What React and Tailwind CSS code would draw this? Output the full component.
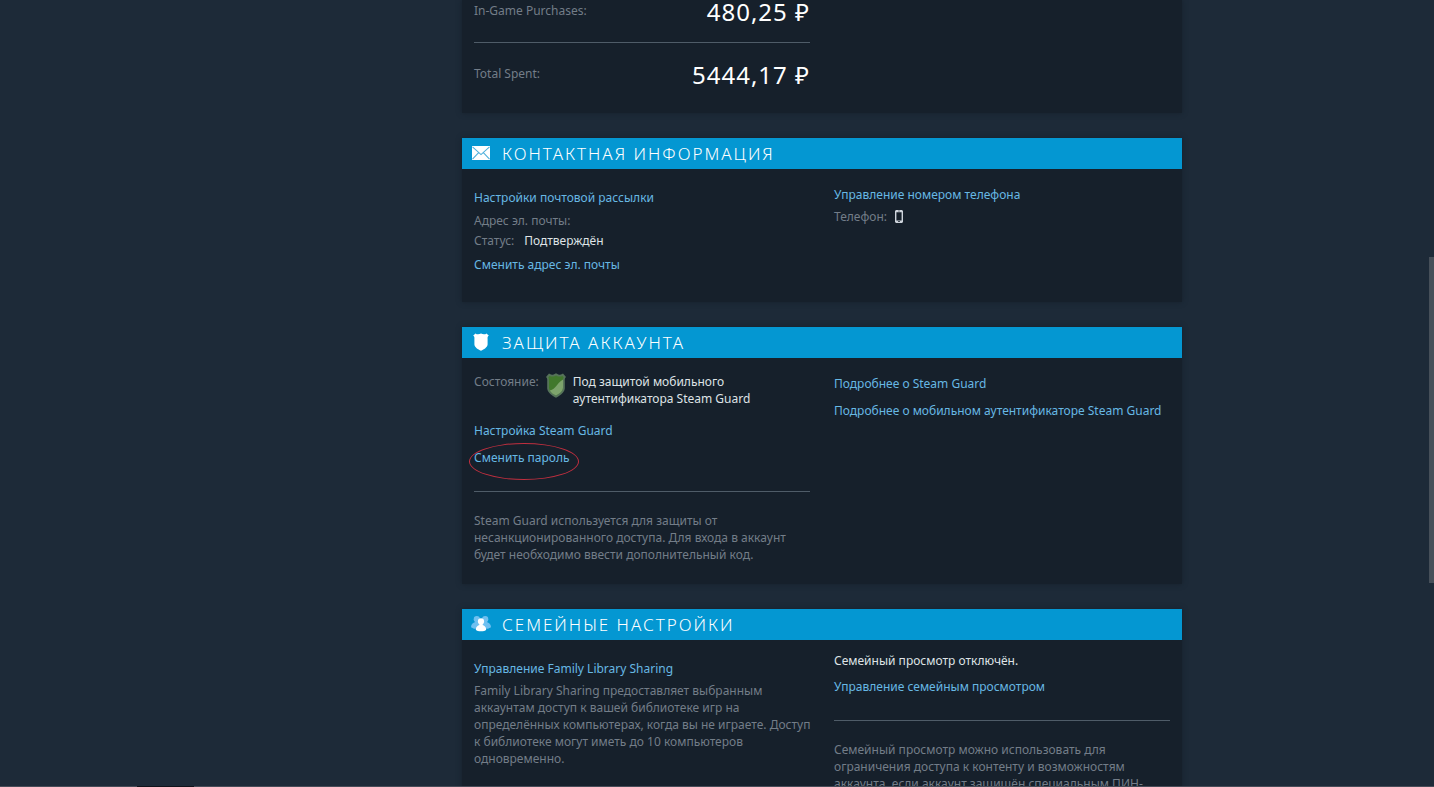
import React from 'react';

const EnvelopeIcon = () => (
  <svg viewBox="0 0 18 14" className="w-[18px] h-[14px]">
    <rect width="18" height="14" fill="#fff" />
    <path d="M0.5 0.8 L9 8.6 L17.5 0.8 M0.5 13.2 L6.4 6.8 M17.5 13.2 L11.6 6.8" fill="none" stroke="#4fb0dc" strokeWidth="1.1" />
  </svg>
);

const ShieldIcon = () => (
  <svg viewBox="0 0 16 18" className="w-4 h-[18px]">
    <path d="M2.6 0.4 C3.6 1.6 6 1.6 8 0.6 C10 1.6 12.4 1.6 13.4 0.4 L15.8 2.6 C14.6 3.6 14.4 4.6 14.6 6 V11.4 C14.4 14.4 11 16 8 17.8 C5 16 1.6 14.4 1.4 11.4 V6 C1.6 4.6 1.4 3.6 0.2 2.6 Z" fill="#fff" />
  </svg>
);

const FamilyIcon = () => (
  <svg viewBox="0 0 20 16" className="w-5 h-4">
    <g fill="#6fc0f0">
      <circle cx="5.8" cy="3.2" r="3.1" />
      <circle cx="14.2" cy="3.2" r="3.1" />
      <path d="M0 11.2 C0 8.2 2 6.8 4.2 6 H15.8 C18 6.8 20 8.2 20 11.2 L17 12.8 H3 Z" />
    </g>
    <circle cx="10" cy="5.4" r="3.1" fill="#fff" />
    <path d="M4.8 13.8 C4.8 10.8 6.8 9.6 8.4 9 V7.6 H11.6 V9 C13.2 9.6 15.2 10.8 15.2 13.8 C13.6 15.8 6.4 15.8 4.8 13.8 Z" fill="#fff" />
  </svg>
);

const PhoneIcon = () => (
  <svg viewBox="0 0 8 13" className="w-2 h-[13px]">
    <path fillRule="evenodd" d="M1 0 H7 L8 1 V12 L7 13 H1 L0 12 V1 Z M1.4 2.2 V10.4 H6.6 V2.2 Z M3 0.8 H5 V1.3 H3 Z M3 11.3 H5 V12.1 H3 Z" fill="#ced4dc" />
  </svg>
);

const GuardBadge = () => (
  <svg viewBox="0 0 20 25" className="w-5 h-[25px] shrink-0">
    <path d="M3 0.6 C5 2.4 8 1.8 10 0.2 C12 1.8 15 2.4 17 0.6 L20 4 C18.4 5.4 18.8 7 18.8 9 V15.4 C18.2 20 14 22.4 10 24.8 C6 22.4 1.8 20 1.2 15.4 V9 C1.2 7 1.6 5.4 0 4 Z" fill="#56735a" />
    <path d="M3.6 3 C6 4 8.4 3.6 10 2.4 C11.6 3.6 14 4 16.4 3 L17.6 4.6 C16.8 6 17 7.6 17 9 V14.8 C16.4 19 13.4 20.6 10 22.6 C6.6 20.6 3.6 19 3 14.8 V9 C3 7.6 3.2 6 2.4 4.6 Z" fill="#41782c" />
    <path d="M17 6.4 V14.8 C16.4 19 13.4 20.6 10 22.6 C7.4 21.1 5 19.8 3.8 17.4 C10.5 16 9.5 11 17 6.4 Z" fill="#7da36c" />
  </svg>
);

const Link = ({ children }) => (
  <a href="#" className="text-[#67b8e4] hover:text-white">{children}</a>
);

const Divider = () => <hr className="border-0 h-px bg-[#4f5c68]" />;

function Section({ icon, title, children }) {
  return (
    <section className="shadow-[0_0_5px_#16202b]">
      <header className="flex items-center h-[31px] pl-2 bg-[#0497d2]">
        <span className="w-[22px] pb-0.5 flex justify-center">{icon}</span>
        <h2 className="pl-2.5 text-[17px] leading-[31px] font-light tracking-[2px] uppercase text-white">{title}</h2>
      </header>
      <div className="grid grid-cols-2 gap-x-6 px-3 bg-[#16202b]">{children}</div>
    </section>
  );
}

function SpendRow({ label, value }) {
  return (
    <div className="flex items-start justify-between">
      <span className="leading-[21px]">{label}</span>
      <span className="text-[24px] leading-[23px] tracking-[1px] text-white">{value}</span>
    </div>
  );
}

export default function App() {
  return (
    <div className="relative flex flex-col h-screen overflow-hidden bg-[#1d2a38] font-['Noto_Sans',sans-serif] text-[12px] leading-[17px] text-[#737d88]">
      <main className="flex-1 min-h-0 overflow-hidden pr-2.5">
        <div className="max-w-[940px] mx-auto pl-[220px] flex flex-col gap-[25px]">
          <section className="grid grid-cols-2 gap-x-6 px-3 pb-[27px] bg-[#16202b] shadow-[0_0_5px_#16202b]">
            <div>
              <SpendRow label="In-Game Purchases:" value="480,25 ₽" />
              <div className="pt-[19px] pb-5"><Divider /></div>
              <SpendRow label="Total Spent:" value="5444,17 ₽" />
            </div>
          </section>

          <Section icon={<EnvelopeIcon />} title="Контактная информация">
            <div className="pt-5 pb-[29px]">
              <Link>Настройки почтовой рассылки</Link>
              <p className="pt-1.5">Адрес эл. почты:</p>
              <p className="pt-[3px] flex gap-2.5">
                Статус: <span className="text-[#dfe3e6]">Подтверждён</span>
              </p>
              <p className="pt-[7px]"><Link>Сменить адрес эл. почты</Link></p>
            </div>
            <div className="pt-[17px]">
              <Link>Управление номером телефона</Link>
              <p className="pt-[5px] flex items-center gap-2">Телефон: <PhoneIcon /></p>
            </div>
          </Section>

          <Section icon={<ShieldIcon />} title="Защита аккаунта">
            <div className="pt-[15px] pb-[21px]">
              <div className="flex">
                <span className="pr-[7px]">Состояние:</span>
                <GuardBadge />
                <span className="pl-[7px] text-[#dfe3e6]">
                  Под защитой мобильного<br />аутентификатора Steam Guard
                </span>
              </div>
              <p className="pt-[15px]"><Link>Настройка Steam Guard</Link></p>
              <p className="mt-2.5 mb-[25px] relative">
                <Link>Сменить пароль</Link>
                <span className="absolute -left-[5px] -top-1.5 w-[110px] h-[37px] rounded-[50%] border border-[#c02f3f] pointer-events-none" />
              </p>
              <Divider />
              <p className="pt-5">
                Steam Guard используется для защиты от<br />
                несанкционированного доступа. Для входа в аккаунт<br />
                будет необходимо ввести дополнительный код.
              </p>
            </div>
            <div className="pt-[17px] flex flex-col gap-2.5">
              <Link>Подробнее о Steam Guard</Link>
              <Link>Подробнее о мобильном аутентификаторе Steam Guard</Link>
            </div>
          </Section>

          <Section icon={<FamilyIcon />} title="Семейные настройки">
            <div className="pt-5 pb-[30px]">
              <Link>Управление Family Library Sharing</Link>
              <p className="pt-[5px] whitespace-nowrap">
                Family Library Sharing предоставляет выбранным<br />
                аккаунтам доступ к вашей библиотеке игр на<br />
                определённых компьютерах, когда вы не играете. Доступ<br />
                к библиотеке могут иметь до 10 компьютеров<br />
                одновременно.
              </p>
            </div>
            <div className="pt-3">
              <p className="text-[#dfe3e6]">Семейный просмотр отключён.</p>
              <p className="pt-[9px] pb-[25px]"><Link>Управление семейным просмотром</Link></p>
              <Divider />
              <p className="pt-5">
                Семейный просмотр можно использовать для<br />
                ограничения доступа к контенту и возможностям<br />
                аккаунта, если аккаунт защищён специальным ПИН-
              </p>
            </div>
          </Section>
        </div>
      </main>

      {/* Scrollbar thumb */}
      <div className="absolute right-0 top-[257px] w-[5px] h-[326px] bg-[#464f59]" />

      {/* Taskbar edge */}
      <div className="flex h-px bg-[#474c58]">
        <span className="ml-[137px] w-[57px] bg-[#10131b]" />
      </div>
    </div>
  );
}
